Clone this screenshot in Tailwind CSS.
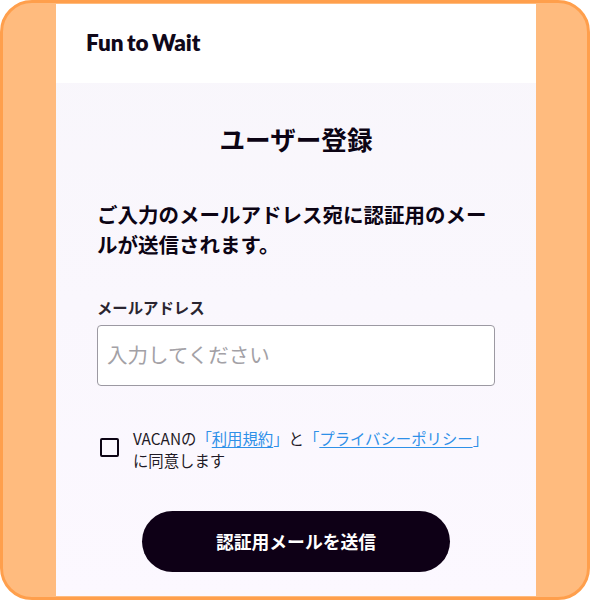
<!DOCTYPE html>
<html lang="ja">
<head>
<meta charset="utf-8">
<script src="https://cdn.jsdelivr.net/npm/@tailwindcss/browser@4"></script>
</head>
<body class="bg-white font-['Noto_Sans_CJK_JP','Noto_Sans',sans-serif] text-[#14081e]">
<div class="w-[590px] h-[600px] rounded-[32px] border-[3px] border-[#ff9f4c] bg-[#ffbb7e] overflow-hidden flex justify-center">
  <main class="w-[480px] h-[600px] -mt-[3px] ml-[2px] shrink-0 border-y-4 border-[#ffbb7e] bg-linear-to-b from-[#f8f6fb] to-[#fcf8ff] flex flex-col">
    <header class="h-[79px] shrink-0 bg-white flex items-center px-[30px]">
      <span class="font-['Lato',sans-serif] font-extrabold text-[22.5px] leading-none tracking-[-0.1px] [word-spacing:-1.5px] text-[#10081a]">Fun to Wait</span>
    </header>
    <section class="flex flex-col px-[41px]">
      <h1 class="mt-[38px] text-center text-[25.6px] leading-9 font-bold text-[#0c0414]">ユーザー登録</h1>
      <p class="mt-[42px] text-[20.5px] leading-[30px] font-bold text-[#0c0414]">ご入力のメールアドレス宛に認証用のメールが送信されます。</p>
      <label class="mt-[36px] text-[15.36px] leading-6 font-bold text-[#2a2530]">メールアドレス</label>
      <div class="mt-[6px] h-[61px] w-[398px] rounded-[4px] border border-[#9c99a2] bg-white flex items-center pl-[9px] pb-[2px] text-[20.5px] text-[#a3a1a6]">入力してください</div>
      <div class="mt-[41px] flex items-start">
        <span class="ml-[3px] mt-[11px] size-[19px] shrink-0 rounded-[2px] border-2 border-[#0c0414]"></span>
        <p class="ml-[14px] w-[360px] text-[15.36px] leading-[22px] text-[#1f1a26]">VACANの<span class="text-[#2e90e8]">「<span class="underline underline-offset-2">利用規約</span>」</span>と<span class="text-[#2e90e8]">「<span class="underline underline-offset-2">プライバシーポリシー</span>」</span>に同意します</p>
      </div>
      <button class="mt-[40px] self-center w-[308px] h-[61px] rounded-full bg-[#0e0016] text-white text-[17.8px] font-bold">認証用メールを送信</button>
    </section>
  </main>
</div>
</body>
</html>
